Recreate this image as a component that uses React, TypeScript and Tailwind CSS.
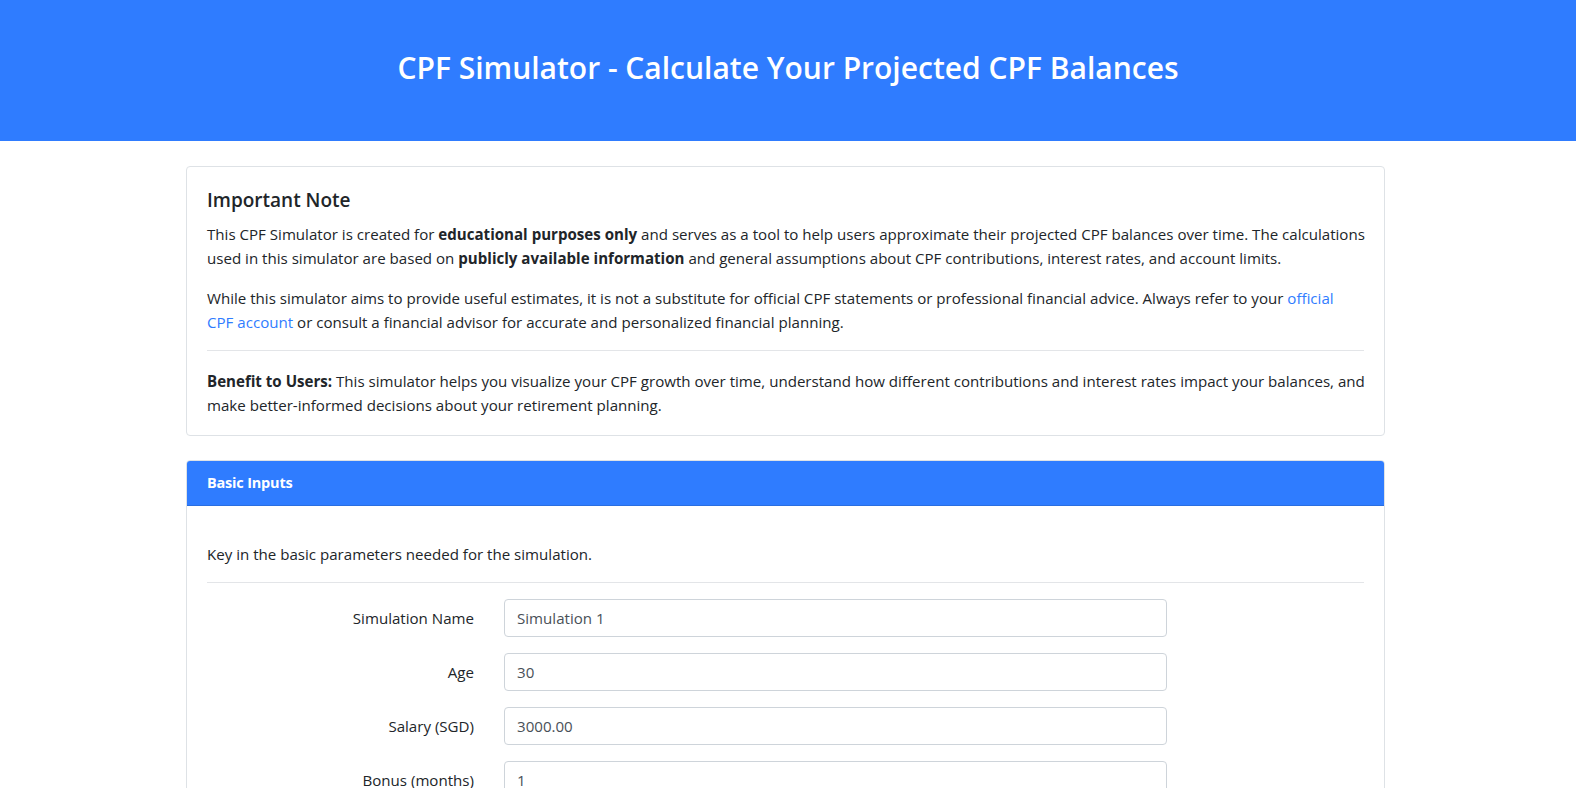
export default function App() {
  const fields = [
    { label: 'Simulation Name', value: 'Simulation 1' },
    { label: 'Age', value: '30' },
    { label: 'Salary (SGD)', value: '3000.00' },
    { label: 'Bonus (months)', value: '1' },
  ];

  return (
    <div className="min-h-screen bg-white text-[#212529] font-['Open_Sans',sans-serif] text-[15.1px] leading-6">
      {/* Header */}
      <header className="h-[141px] bg-[#2f7cff] flex items-center justify-center pb-[6px]">
        <h1 className="text-white text-[30px] font-semibold">
          CPF Simulator - Calculate Your Projected CPF Balances
        </h1>
      </header>

      <main className="w-[1204px] mx-auto pr-[5px] pt-[25px]">
        {/* Important Note */}
        <section className="border border-[#dee2e6] rounded px-5 pt-5 pb-[18px]">
          <h2 className="text-[19px] font-semibold leading-6 mb-[10px] mt-[1px]">Important Note</h2>
          <p className="mb-[16px] whitespace-nowrap">
            This CPF Simulator is created for <strong className="font-bold">educational purposes only</strong> and
            serves as a tool to help users approximate their projected CPF balances over time. The calculations
            <br />
            used in this simulator are based on <strong className="font-bold">publicly available information</strong>{' '}
            and general assumptions about CPF contributions, interest rates, and account limits.
          </p>
          <p className="whitespace-nowrap">
            While this simulator aims to provide useful estimates, it is not a substitute for official CPF statements
            or professional financial advice. Always refer to your{' '}
            <a href="#" className="text-[#2f7cff]">
              official
              <br />
              CPF account
            </a>{' '}
            or consult a financial advisor for accurate and personalized financial planning.
          </p>
          <hr className="border-t border-[#e3e5e8] mt-[16px] mb-[18px]" />
          <p className="whitespace-nowrap">
            <strong className="font-bold">Benefit to Users:</strong> This simulator helps you visualize your CPF
            growth over time, understand how different contributions and interest rates impact your balances, and
            <br />
            make better-informed decisions about your retirement planning.
          </p>
        </section>

        {/* Basic Inputs */}
        <section className="mt-[24px] border border-[#dee2e6] rounded overflow-hidden">
          <div className="h-[45px] bg-[#2f7cff] border-b border-[#2a6ee0] flex items-center px-5">
            <span className="text-white font-bold text-[14.5px] tracking-[-0.2px]">Basic Inputs</span>
          </div>
          <div className="px-5 pt-[36px] pb-5">
            <p>Key in the basic parameters needed for the simulation.</p>
            <hr className="border-t border-[#e3e5e8] mt-[16px] mb-[16px]" />
            <div className="flex flex-col gap-4">
              {fields.map((f) => (
                <div key={f.label} className="flex items-center">
                  <label className="w-[267px] text-right">{f.label}</label>
                  <input
                    type="text"
                    defaultValue={f.value}
                    className="ml-[30px] w-[663px] h-[38px] px-3 border border-[#ced4da] rounded text-[#495057] text-[15.1px] outline-none"
                  />
                </div>
              ))}
            </div>
          </div>
        </section>
      </main>
    </div>
  );
}
